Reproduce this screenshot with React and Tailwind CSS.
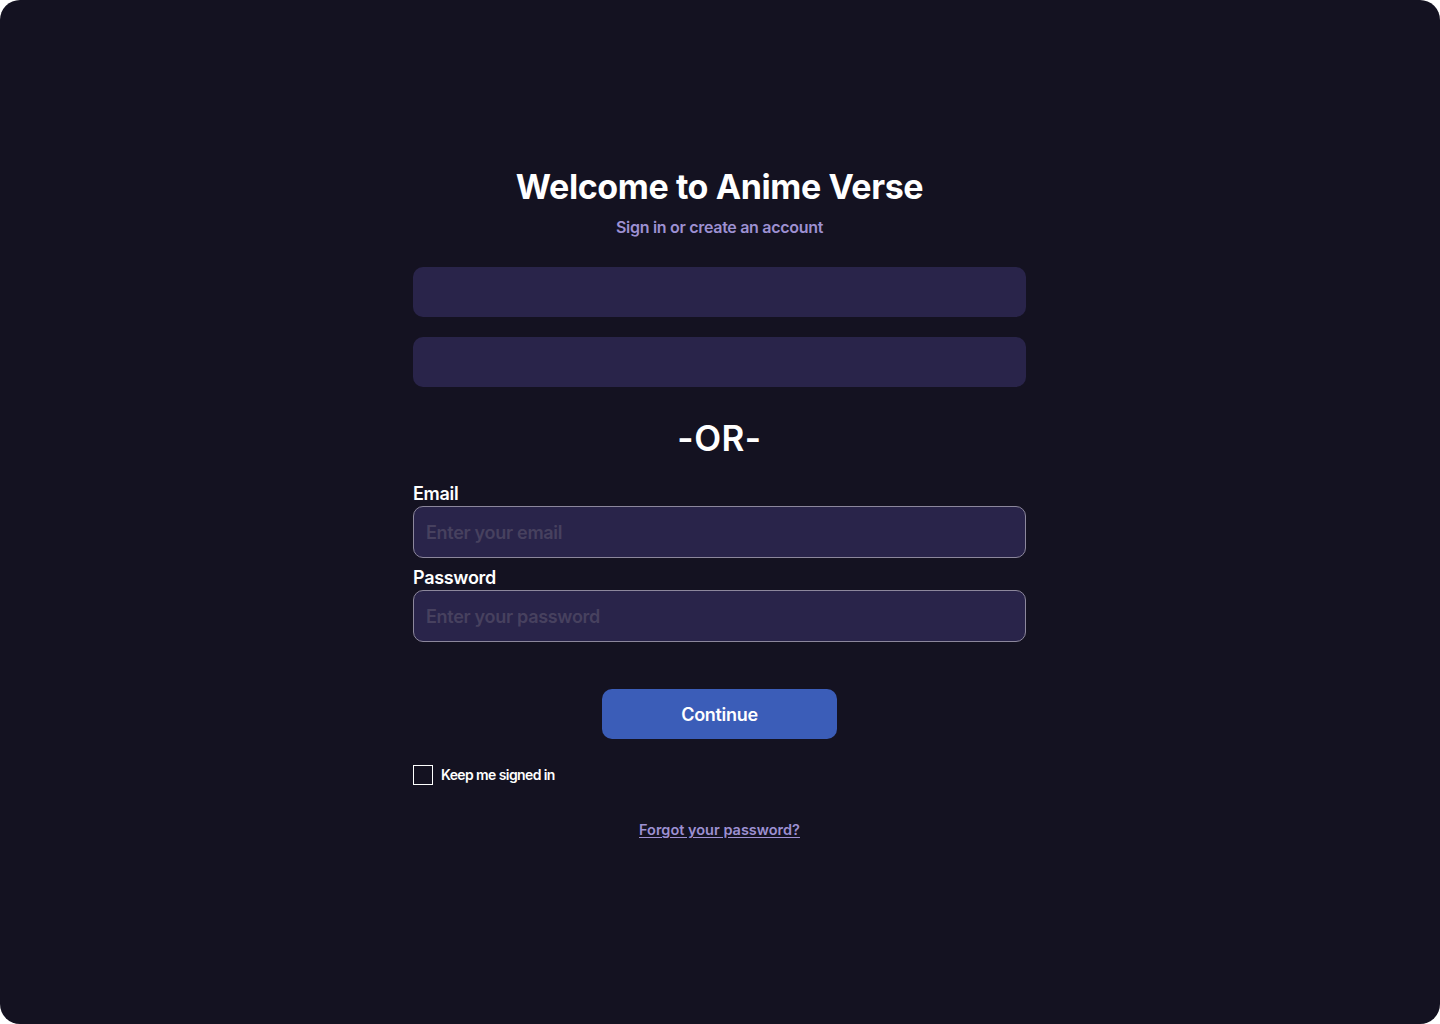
import React, { useState } from 'react';

// Sign-in screen for Anime Verse
const App = () => {
  const [remember, setRemember] = useState(false);

  return (
    <div className="w-[1440px] h-[1024px] bg-white">
      <div
        className="w-full h-full rounded-[20px] bg-[#141221] flex justify-center"
        style={{ fontFamily: 'Inter, "Noto Sans", sans-serif' }}
      >
        <div className="w-[613px] mr-px pt-[165px] flex flex-col">
          <h1 className="text-center text-white text-[34px] leading-[44px] font-bold tracking-[-0.4px]">
            Welcome to Anime Verse
          </h1>
          <p className="mt-[8px] text-center text-[#9d90d2] text-[16px] leading-[20px] font-semibold tracking-[-0.3px]">
            Sign in or create an account
          </p>

          {/* social providers placeholders */}
          <div className="mt-[30px] flex flex-col gap-[20px]">
            <div className="h-[50px] rounded-[10px] bg-[#29244a]" />
            <div className="h-[50px] rounded-[10px] bg-[#29244a]" />
          </div>

          <div className="mt-[30px] text-center text-white text-[35px] leading-[42px] font-semibold tracking-[0.5px]">
            -OR-
          </div>

          <label className="mt-[24px] text-white text-[18px] leading-[22px] font-semibold tracking-[-0.3px]">
            Email
          </label>
          <input
            type="email"
            placeholder="Enter your email"
            className="mt-[1px] h-[52px] rounded-[10px] border border-[#8c879c] bg-[#29244a] px-[12px] text-[18px] font-semibold text-white placeholder:text-[#47415f] outline-none tracking-[-0.3px]"
          />

          <label className="mt-[9px] text-white text-[18px] leading-[22px] font-semibold tracking-[-0.3px]">
            Password
          </label>
          <input
            type="password"
            placeholder="Enter your password"
            className="mt-[1px] h-[52px] rounded-[10px] border border-[#8c879c] bg-[#29244a] px-[12px] text-[18px] font-semibold text-white placeholder:text-[#47415f] outline-none tracking-[-0.3px]"
          />

          <button className="mt-[47px] self-center w-[235px] h-[50px] rounded-[10px] bg-[#3b5db8] text-white text-[18px] font-semibold tracking-[-0.3px]">
            Continue
          </button>

          <label className="mt-[25px] flex items-center gap-[8px] cursor-pointer">
            <span
              onClick={() => setRemember(!remember)}
              className="w-[20px] h-[20px] border border-white flex items-center justify-center"
            >
              {remember && <span className="w-[10px] h-[10px] bg-white" />}
            </span>
            <span className="text-white text-[14px] font-semibold tracking-[-0.6px]">Keep me signed in</span>
          </label>

          <a
            href="#"
            className="mt-[34px] self-center text-[#9d90d2] text-[14.5px] font-semibold underline underline-offset-2"
          >
            Forgot your password?
          </a>
        </div>
      </div>
    </div>
  );
};

export default App;
